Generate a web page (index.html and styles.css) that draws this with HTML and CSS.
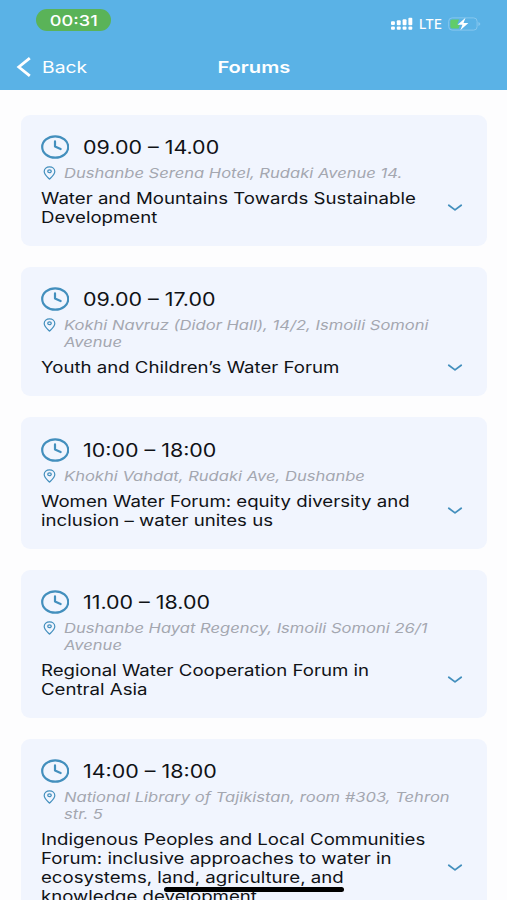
FILE: index.html
```html
<!DOCTYPE html>
<html lang="en">
<head>
    <meta charset="UTF-8">
    <title>Forums</title>
    <link rel="stylesheet" href="styles.css">
</head>
<body>
    <svg width="0" height="0" class="sprite">
        <symbol id="clock" viewBox="0 0 28 24" preserveAspectRatio="none">
            <ellipse cx="14.2" cy="12" rx="13" ry="10.7"/>
            <path d="M14 6.4V11.6L19.6 14"/>
        </symbol>
        <symbol id="pin" viewBox="0 0 12 14">
            <path d="M6 13.2C3.6 10.8 0.7 8.4 0.7 5.5C0.7 2.8 3 0.8 6 0.8S11.3 2.8 11.3 5.5C11.3 8.4 8.4 10.8 6 13.2Z"/>
            <ellipse cx="6" cy="5.2" rx="1.8" ry="1.4"/>
        </symbol>
        <symbol id="chevron" viewBox="0 0 16 8">
            <path d="M1.8 1.3L8 5.9L14.2 1.3"/>
        </symbol>
    </svg>

    <header>
        <div class="status">
            <div class="clock-pill"><span>00:31</span></div>
            <div class="status-right">
                <svg class="signal" width="22" height="14" viewBox="0 0 22 14" fill="#fff">
                    <rect x="0" y="4.2" width="3.9" height="3.8" rx="1"/>
                    <rect x="5.8" y="3.3" width="3.9" height="4.9" rx="1"/>
                    <rect x="11.6" y="2.2" width="3.9" height="6" rx="1"/>
                    <rect x="17.4" y="0.8" width="3.9" height="7.4" rx="1"/>
                    <rect x="0" y="9.5" width="3.9" height="3.3" rx="1"/>
                    <rect x="5.8" y="9.5" width="3.9" height="3.3" rx="1"/>
                    <rect x="11.6" y="9.5" width="3.9" height="3.3" rx="1"/>
                    <rect x="17.4" y="9.5" width="3.9" height="3.3" rx="1"/>
                </svg>
                <span class="lte">LTE</span>
                <svg class="battery" width="33" height="14" viewBox="0 0 33 14">
                    <rect x="0.7" y="0.9" width="28.4" height="12.2" rx="3.4" fill="none" stroke="#86c7ee"/>
                    <path d="M4 2.4H11L9.2 7.5H12L10.6 11.6H4Q2.3 11.6 2.3 9.8V4.2Q2.3 2.4 4 2.4Z" fill="#61cc6a"/>
                    <path d="M30.4 5Q32.4 6 32.4 7T30.4 9Z" fill="#86c7ee"/>
                    <path d="M17.5 0.8L9.6 7.8H14.5L12.3 13.2L20.4 6H15.5Z" fill="#fff"/>
                </svg>
            </div>
        </div>
        <nav>
            <a class="back" href="#">
                <svg width="16" height="20" viewBox="0 0 16 20"><path d="M13.8 1.2L2.8 10L13.8 18.8"/></svg>
                <span>Back</span>
            </a>
            <h1>Forums</h1>
        </nav>
    </header>

    <main>
        <div class="card">
            <div class="time">
                <svg class="icon-clock"><use href="#clock"/></svg>
                <span>09.00 – 14.00</span>
            </div>
            <div class="place">
                <svg class="icon-pin"><use href="#pin"/></svg>
                <p>Dushanbe Serena Hotel, Rudaki Avenue 14.</p>
            </div>
            <div class="topic">
                <h2>Water and Mountains Towards Sustainable<br>Development</h2>
                <svg class="icon-chevron"><use href="#chevron"/></svg>
            </div>
        </div>

        <div class="card">
            <div class="time">
                <svg class="icon-clock"><use href="#clock"/></svg>
                <span>09.00 – 17.00</span>
            </div>
            <div class="place">
                <svg class="icon-pin"><use href="#pin"/></svg>
                <p>Kokhi Navruz (Didor Hall), 14/2, Ismoili Somoni<br>Avenue</p>
            </div>
            <div class="topic">
                <h2>Youth and Children’s Water Forum</h2>
                <svg class="icon-chevron"><use href="#chevron"/></svg>
            </div>
        </div>

        <div class="card">
            <div class="time">
                <svg class="icon-clock"><use href="#clock"/></svg>
                <span>10:00 – 18:00</span>
            </div>
            <div class="place">
                <svg class="icon-pin"><use href="#pin"/></svg>
                <p>Khokhi Vahdat, Rudaki Ave, Dushanbe</p>
            </div>
            <div class="topic">
                <h2>Women Water Forum: equity diversity and<br>inclusion – water unites us</h2>
                <svg class="icon-chevron"><use href="#chevron"/></svg>
            </div>
        </div>

        <div class="card">
            <div class="time">
                <svg class="icon-clock"><use href="#clock"/></svg>
                <span>11.00 – 18.00</span>
            </div>
            <div class="place">
                <svg class="icon-pin"><use href="#pin"/></svg>
                <p>Dushanbe Hayat Regency, Ismoili Somoni 26/1<br>Avenue</p>
            </div>
            <div class="topic">
                <h2>Regional Water Cooperation Forum in<br>Central Asia</h2>
                <svg class="icon-chevron"><use href="#chevron"/></svg>
            </div>
        </div>

        <div class="card">
            <div class="time">
                <svg class="icon-clock"><use href="#clock"/></svg>
                <span>14:00 – 18:00</span>
            </div>
            <div class="place">
                <svg class="icon-pin"><use href="#pin"/></svg>
                <p>National Library of Tajikistan, room #303, Tehron<br>str. 5</p>
            </div>
            <div class="topic">
                <h2>Indigenous Peoples and Local Communities<br>Forum: inclusive approaches to water in<br>ecosystems, land, agriculture, and<br>knowledge development</h2>
                <svg class="icon-chevron"><use href="#chevron"/></svg>
            </div>
        </div>
    </main>

    <div class="home-bar"></div>
</body>
</html>
```

FILE: styles.css
```css
* {
    box-sizing: border-box;
}
body {
    margin: 0;
    height: 900px;
    overflow: hidden;
    background-color: #fdfdfe;
    font-family: Inter, "Liberation Sans", sans-serif;
    color: #101216;
}
h1, h2, p {
    margin: 0;
    font-weight: 400;
}
.sprite {
    display: block;
}

/* header */
header {
    height: 89.5px;
    background-color: #5ab2e6;
    color: #fff;
}
.status {
    display: flex;
    justify-content: space-between;
    height: 45px;
    padding: 9px 26px 0 36px;
}
.clock-pill {
    display: flex;
    align-items: center;
    justify-content: center;
    width: 75px;
    height: 22px;
    border-radius: 11px;
    background-color: #5ab358;
}
.clock-pill span {
    font-size: 15px;
    font-weight: 500;
    transform: scaleX(1.21);
}
.status-right {
    display: flex;
    align-items: center;
    height: 29px;
}
.lte {
    width: 24px;
    margin: 1px 5px 0 6px;
    font-size: 12.5px;
    font-weight: 500;
    transform: scaleX(1.06);
    transform-origin: left;
}
nav {
    display: grid;
    grid-template-columns: 1fr auto 1fr;
    align-items: center;
    height: 44px;
    padding-left: 16px;
    padding-right: 16px;
}
.back {
    display: flex;
    align-items: center;
    gap: 10px;
    color: #fff;
    text-decoration: none;
}
.back svg {
    fill: none;
    stroke: #fff;
    stroke-width: 2.8;
}
.back span {
    font-size: 16.5px;
    transform: scaleX(1.17);
    transform-origin: left;
}
h1 {
    font-size: 16.5px;
    font-weight: 600;
    transform: scaleX(1.22);
}

/* forum list */
main {
    display: flex;
    flex-direction: column;
    gap: 20.85px;
    padding: 25.1px 20px 0 21px;
}
.card {
    padding: 20.95px 20px 19.05px 19.5px;
    border-radius: 9px;
    background-color: #f1f5fe;
}
.card svg {
    flex: none;
    fill: none;
    stroke: #438fbd;
    stroke-linecap: round;
    stroke-linejoin: round;
}
.time {
    display: flex;
    align-items: center;
    gap: 14px;
    height: 24px;
    margin-bottom: 5.5px;
}
.time span {
    font-size: 18px;
    white-space: nowrap;
    transform: scaleX(1.19);
    transform-origin: left;
}
.icon-clock {
    width: 28px;
    height: 24px;
    margin-top: -1px;
    stroke-width: 2.2;
}
.place {
    display: flex;
    gap: 8.5px;
    margin-bottom: 7px;
    padding-left: 2px;
}
.place p {
    font-size: 13.5px;
    font-style: italic;
    line-height: 17px;
    white-space: nowrap;
    color: #a4a7b0;
    transform: scaleX(1.227);
    transform-origin: left;
}
.icon-pin {
    width: 13px;
    height: 14px;
    margin-top: 1px;
    stroke-width: 1.2;
}
.topic {
    display: flex;
    align-items: center;
    justify-content: space-between;
    padding-right: 4px;
}
.topic h2 {
    font-size: 15.5px;
    line-height: 19px;
    white-space: nowrap;
    transform: scaleX(1.202);
    transform-origin: left;
}
.icon-chevron {
    width: 16px;
    height: 8px;
    stroke-width: 1.8;
}

.home-bar {
    position: absolute;
    left: 164px;
    top: 887px;
    width: 180px;
    height: 5px;
    border-radius: 3px;
    background-color: #000;
}
```
